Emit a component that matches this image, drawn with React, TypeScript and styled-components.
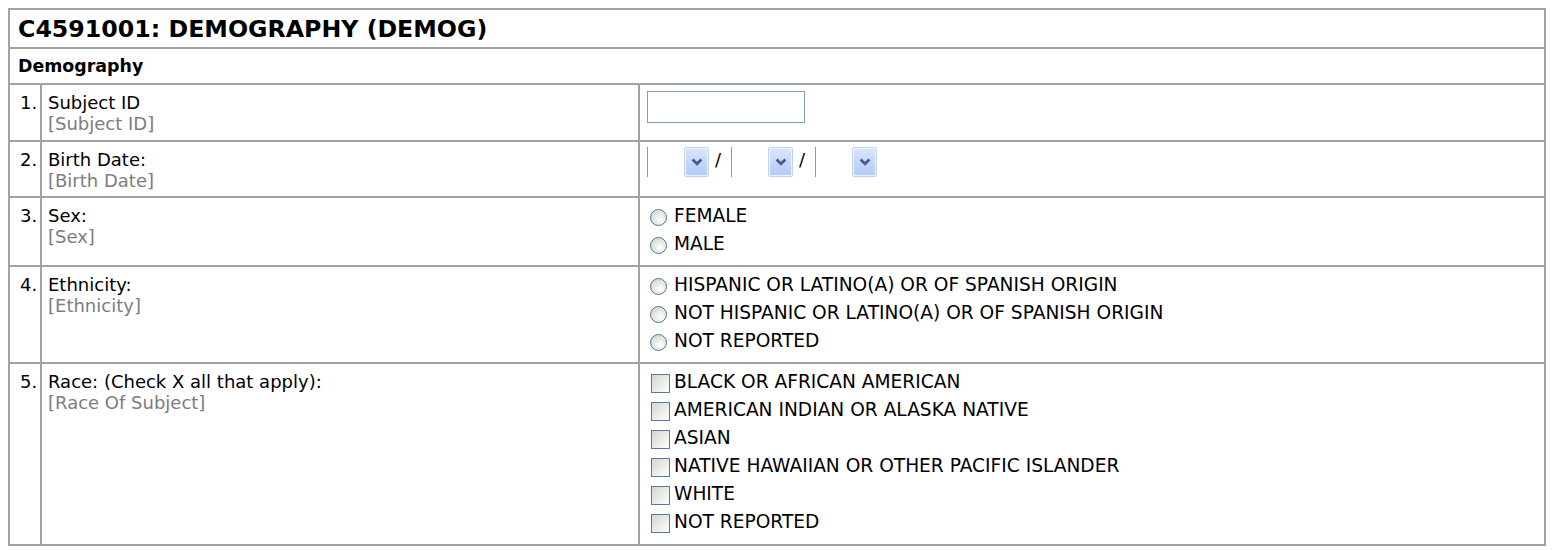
import styled, { createGlobalStyle } from 'styled-components';

const GlobalStyle = createGlobalStyle`
  body {
    margin: 8px;
    background: #ffffff;
    font-family: "DejaVu Sans", Verdana, sans-serif;
    color: #000000;
  }
`;

const LINE = '#a3a3a3';

const Form = styled.div`
  width: 1538px;
  box-sizing: border-box;
  border: 2px solid ${LINE};
`;

const Title = styled.div`
  height: 37px;
  display: flex;
  align-items: center;
  padding: 0 8px;
  font-size: 23.7px;
  font-weight: 700;
  border-bottom: 2px solid ${LINE};
`;

const Section = styled.div`
  height: 34px;
  display: flex;
  align-items: center;
  padding: 0 8px;
  font-size: 17.4px;
  font-weight: 700;
  border-bottom: 2px solid ${LINE};
`;

const Row = styled.div<{ $last?: boolean }>`
  display: grid;
  grid-template-columns: 30px 598px 1fr;
  border-bottom: ${(p) => (p.$last ? 'none' : `2px solid ${LINE}`)};
  font-size: 18px;
`;

const NumCell = styled.div`
  padding: 7px 0 5px 10px;
  line-height: 21px;
`;

const LabelCell = styled.div`
  border-left: 2px solid ${LINE};
  padding: 7px 6px 5px 6px;
  line-height: 21px;
`;

const Hint = styled.div`
  color: #7d7d7d;
`;

const ValueCell = styled.div<{ $tail?: number }>`
  border-left: 2px solid ${LINE};
  padding: 4px 6px ${(p) => p.$tail ?? 7}px 6px;
  font-size: 18.6px;
`;

const TextInput = styled.div`
  width: 158px;
  height: 32px;
  box-sizing: border-box;
  margin: 2px 0 10px 1px;
  border: 1px solid #7f9db9;
`;

const DateLine = styled.div`
  display: flex;
  align-items: flex-start;
  height: 43px;
  padding-top: 1px;
  box-sizing: border-box;
`;

const DateSelect = styled.div`
  width: 62px;
  height: 30px;
  box-sizing: border-box;
  margin-left: 1px;
  border-left: 1px solid #7f9db9;
  display: flex;
  justify-content: flex-end;
`;

const DropButton = styled.div`
  width: 25px;
  height: 30px;
  box-sizing: border-box;
  border: 1px solid #c3d3f0;
  border-radius: 2px;
  padding: 1px;
  background: #eef3fd;
  display: flex;
`;

const DropFace = styled.div`
  flex: 1;
  border-radius: 1px;
  background: linear-gradient(180deg, #d9e5fd 0%, #c5d7fc 50%, #b4cbfa 100%);
  display: flex;
  align-items: center;
  justify-content: center;
`;

const Slash = styled.span`
  width: 21px;
  padding-left: 6px;
  box-sizing: border-box;
  line-height: 26px;
  font-size: 18px;
`;

const Option = styled.div`
  height: 28px;
  box-sizing: border-box;
  padding: 0 0 2px 5px;
  display: flex;
  align-items: center;
  gap: 7px;
  white-space: nowrap;
`;

const Radio = styled.span`
  width: 17px;
  height: 17px;
  box-sizing: border-box;
  border-radius: 50%;
  border: 1.5px solid #4f76a6;
  background: radial-gradient(circle at 62% 65%, #ffffff 0%, #f0f0eb 30%, #cfcfc6 95%);
  margin-top: 4px;
  margin-left: -1px;
  flex-shrink: 0;
`;

const Check = styled.span`
  width: 19px;
  height: 19px;
  box-sizing: border-box;
  border: 1px solid #56799f;
  background: linear-gradient(135deg, #d6d6d0 0%, #ececE7 55%, #ffffff 100%);
  margin-top: 4px;
  margin-right: -3px;
  flex-shrink: 0;
`;

const Chevron = () => (
  <svg width="12" height="8" viewBox="0 0 12 8">
    <path d="M1.6 1.4 L6 5.8 L10.4 1.4" fill="none" stroke="#485d87" strokeWidth="2.8" />
  </svg>
);

type Item = {
  num: string;
  label: string;
  hint: string;
};

const Label = ({ num, label, hint }: Item) => (
  <>
    <NumCell>{num}</NumCell>
    <LabelCell>
      <div>{label}</div>
      <Hint>{hint}</Hint>
    </LabelCell>
  </>
);

const DateBox = () => (
  <DateSelect>
    <DropButton>
      <DropFace>
        <Chevron />
      </DropFace>
    </DropButton>
  </DateSelect>
);

const sexOptions = ['FEMALE', 'MALE'];
const ethnicityOptions = [
  'HISPANIC OR LATINO(A) OR OF SPANISH ORIGIN',
  'NOT HISPANIC OR LATINO(A) OR OF SPANISH ORIGIN',
  'NOT REPORTED',
];
const raceOptions = [
  'BLACK OR AFRICAN AMERICAN',
  'AMERICAN INDIAN OR ALASKA NATIVE',
  'ASIAN',
  'NATIVE HAWAIIAN OR OTHER PACIFIC ISLANDER',
  'WHITE',
  'NOT REPORTED',
];

const App = () => {
  return (
    <>
      <GlobalStyle />
      <Form>
        <Title>C4591001: DEMOGRAPHY (DEMOG)</Title>
        <Section>Demography</Section>

        <Row>
          <Label num="1." label="Subject ID" hint="[Subject ID]" />
          <ValueCell>
            <TextInput />
          </ValueCell>
        </Row>

        <Row>
          <Label num="2." label="Birth Date:" hint="[Birth Date]" />
          <ValueCell>
            <DateLine>
              <DateBox />
              <Slash>/</Slash>
              <DateBox />
              <Slash>/</Slash>
              <DateBox />
            </DateLine>
          </ValueCell>
        </Row>

        <Row>
          <Label num="3." label="Sex:" hint="[Sex]" />
          <ValueCell>
            {sexOptions.map((o) => (
              <Option key={o}>
                <Radio />
                {o}
              </Option>
            ))}
          </ValueCell>
        </Row>

        <Row>
          <Label num="4." label="Ethnicity:" hint="[Ethnicity]" />
          <ValueCell>
            {ethnicityOptions.map((o) => (
              <Option key={o}>
                <Radio />
                {o}
              </Option>
            ))}
          </ValueCell>
        </Row>

        <Row $last>
          <Label num="5." label="Race: (Check X all that apply):" hint="[Race Of Subject]" />
          <ValueCell $tail={8}>
            {raceOptions.map((o) => (
              <Option key={o}>
                <Check />
                {o}
              </Option>
            ))}
          </ValueCell>
        </Row>
      </Form>
    </>
  );
};

export default App;
